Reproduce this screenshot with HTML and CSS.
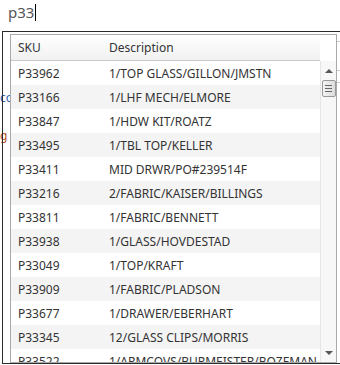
FILE: index.html
```html
<!DOCTYPE html>
<html>
<head>
<meta charset="utf-8">
<link rel="stylesheet" href="styles.css">
</head>
<body>
<div class="page">
  <div class="search"><span class="query">p33</span><span class="caret"></span></div>
  <div class="behind">
    <div class="bg-line l1"></div>
    <div class="bg-line l2"></div>
    <div class="bg-line l3"></div>
    <div class="bg-text t1">co</div>
    <div class="bg-text t2">g</div>
  </div>
  <div class="popup">
    <div class="list">
      <div class="main">
        <div class="head"><div class="c-sku">SKU</div><div class="c-desc">Description</div></div>
        <div class="row"><div class="c-sku">P33962</div><div class="c-desc">1/TOP GLASS/GILLON/JMSTN</div></div>
        <div class="row alt"><div class="c-sku">P33166</div><div class="c-desc">1/LHF MECH/ELMORE</div></div>
        <div class="row"><div class="c-sku">P33847</div><div class="c-desc">1/HDW KIT/ROATZ</div></div>
        <div class="row alt"><div class="c-sku">P33495</div><div class="c-desc">1/TBL TOP/KELLER</div></div>
        <div class="row"><div class="c-sku">P33411</div><div class="c-desc">MID DRWR/PO#239514F</div></div>
        <div class="row alt"><div class="c-sku">P33216</div><div class="c-desc">2/FABRIC/KAISER/BILLINGS</div></div>
        <div class="row"><div class="c-sku">P33811</div><div class="c-desc">1/FABRIC/BENNETT</div></div>
        <div class="row alt"><div class="c-sku">P33938</div><div class="c-desc">1/GLASS/HOVDESTAD</div></div>
        <div class="row"><div class="c-sku">P33049</div><div class="c-desc">1/TOP/KRAFT</div></div>
        <div class="row alt"><div class="c-sku">P33909</div><div class="c-desc">1/FABRIC/PLADSON</div></div>
        <div class="row"><div class="c-sku">P33677</div><div class="c-desc">1/DRAWER/EBERHART</div></div>
        <div class="row alt"><div class="c-sku">P33345</div><div class="c-desc">12/GLASS CLIPS/MORRIS</div></div>
        <div class="row"><div class="c-sku">P33522</div><div class="c-desc">1/ARMCOVS/BURMEISTER/BOZEMAN</div></div>
      </div>
      <div class="side">
        <div class="side-top"></div>
        <div class="scroll">
          <div class="arrow up"></div>
          <div class="thumb"><span></span><span></span><span></span></div>
          <div class="track"></div>
          <div class="arrow down"></div>
        </div>
      </div>
    </div>
  </div>
</div>
</body>
</html>
```
FILE: styles.css
```css
html, body {
  margin: 0;
  padding: 0;
  background: #fff;
}
.page {
  position: relative;
  width: 340px;
  height: 365px;
  overflow: hidden;
  font-family: "Segoe UI", "Noto Sans", "Open Sans", sans-serif;
}
.search {
  display: flex;
  align-items: center;
  height: 24px;
  padding-left: 8px;
  font-size: 15px;
  color: #555;
}
.caret {
  width: 1px;
  height: 17px;
  background: #000;
  margin-left: 1px;
}
.behind {
  position: absolute;
  inset: 0;
}
.bg-line {
  position: absolute;
  left: 300px;
  width: 40px;
  height: 1px;
  background: #ccc;
}
.l1 { top: 41px; }
.l2 { top: 70px; }
.l3 { top: 82px; }
.bg-text {
  position: absolute;
  left: 0;
  font-size: 12px;
}
.t1 { top: 89px; color: #2a5db0; }
.t2 { top: 127px; color: #b5502a; }
.popup {
  position: absolute;
  left: 2px;
  top: 31px;
  width: 345px;
  border: 1px solid #2b2b2b;
  padding: 2px 0 0 7px;
  box-sizing: border-box;
  height: 333px;
}
.list {
  display: flex;
  width: 325px;
  height: 327px;
  border: 1px solid #a9a9a9;
  background: #fff;
  overflow: hidden;
}
.main {
  flex: 1;
  overflow: hidden;
}
.head {
  display: flex;
  align-items: center;
  height: 25px;
  border-bottom: 1px solid #c8c8c8;
  background: linear-gradient(#ffffff, #f1f1f1);
  font-size: 12px;
  color: #333;
}
.row {
  display: flex;
  align-items: center;
  height: 24px;
  font-size: 12px;
  color: #333;
  white-space: nowrap;
}
.row.alt {
  background: #f4f4f4;
}
.c-sku {
  width: 91px;
  padding-left: 7px;
  flex: none;
}
.c-desc {
  flex: 1;
}
.side {
  width: 16px;
  flex: none;
  display: flex;
  flex-direction: column;
}
.side-top {
  height: 26px;
}
.scroll {
  flex: 1;
  display: flex;
  flex-direction: column;
  align-items: center;
  background: #f7f7f7;
  border-left: 1px solid #e6e6e6;
}
.arrow {
  width: 0;
  height: 0;
  border-left: 4px solid transparent;
  border-right: 4px solid transparent;
  margin: 7px 0;
}
.arrow.up {
  border-bottom: 4px solid #555;
  margin-top: 8px;
}
.arrow.down {
  border-top: 4px solid #555;
}
.thumb {
  width: 12px;
  height: 15px;
  border: 1px solid #999;
  border-radius: 2px;
  background: linear-gradient(90deg, #f3f3f3, #dcdcdc);
  display: flex;
  flex-direction: column;
  justify-content: center;
  align-items: center;
  gap: 2px;
}
.thumb span {
  width: 7px;
  height: 1px;
  background: #666;
}
.track {
  flex: 1;
}
```
